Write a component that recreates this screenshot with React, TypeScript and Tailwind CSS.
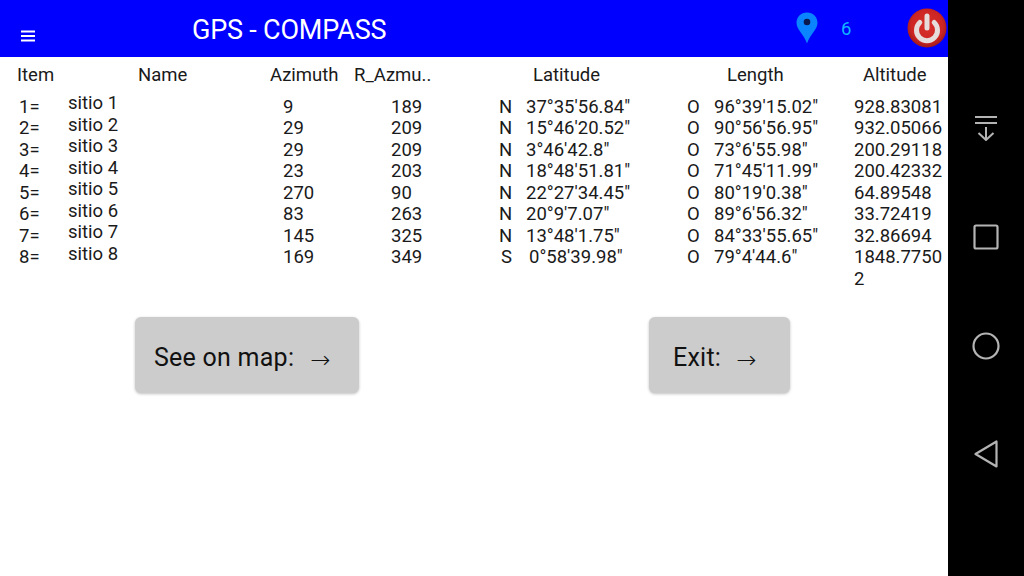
const rows = [
  { item: "1=", name: "sitio 1", az: "9", raz: "189", ns: "N", lat: "37°35'56.84\"", ew: "O", len: "96°39'15.02\"", alt: "928.83081" },
  { item: "2=", name: "sitio 2", az: "29", raz: "209", ns: "N", lat: "15°46'20.52\"", ew: "O", len: "90°56'56.95\"", alt: "932.05066" },
  { item: "3=", name: "sitio 3", az: "29", raz: "209", ns: "N", lat: "3°46'42.8\"", ew: "O", len: "73°6'55.98\"", alt: "200.29118" },
  { item: "4=", name: "sitio 4", az: "23", raz: "203", ns: "N", lat: "18°48'51.81\"", ew: "O", len: "71°45'11.99\"", alt: "200.42332" },
  { item: "5=", name: "sitio 5", az: "270", raz: "90", ns: "N", lat: "22°27'34.45\"", ew: "O", len: "80°19'0.38\"", alt: "64.89548" },
  { item: "6=", name: "sitio 6", az: "83", raz: "263", ns: "N", lat: "20°9'7.07\"", ew: "O", len: "89°6'56.32\"", alt: "33.72419" },
  { item: "7=", name: "sitio 7", az: "145", raz: "325", ns: "N", lat: "13°48'1.75\"", ew: "O", len: "84°33'55.65\"", alt: "32.86694" },
  { item: "8=", name: "sitio 8", az: "169", raz: "349", ns: "S", lat: "0°58'39.98\"", ew: "O", len: "79°4'44.6\"", alt: "1848.77502" },
]

const Header = () => (
  <div className="h-[57px] bg-[#0000ff] flex items-center relative shrink-0">
    <svg width="14" height="12" viewBox="0 0 14 12" className="ml-[21px] mt-[14px] shrink-0">
      <path d="M0 1.5h14M0 6h14M0 10.5h14" stroke="#fff" strokeWidth="2" />
    </svg>
    <span className="ml-[157px] w-[195px] whitespace-nowrap text-[27px] tracking-[-0.2px] text-white mt-[3px]">GPS - COMPASS</span>
    <svg width="24" height="32" viewBox="0 0 24 32" className="ml-[408px] shrink-0 -mt-px">
      <path d="M12 0.5C5.8 0.5 1.5 5 1.5 10.8c0 6.6 7 11 10.5 20.7C15.500 21.800 22.500 17.400 22.500 10.800 22.500 5 18.200 0.500 12 0.500z" fill="#0a84ff" />
      <circle cx="12" cy="10" r="3.300" fill="#0a1a50" />
    </svg>
    <span className="ml-[22px] text-[18.5px] text-[#10b4ff] mt-[2px]">6</span>
    <svg width="40" height="40" viewBox="0 0 40 40" className="absolute left-[907px] top-[8px]">
      <defs>
        <radialGradient id="powerRed" cx="50%" cy="45%" r="55%">
          <stop offset="0%" stopColor="#d9302c" />
          <stop offset="75%" stopColor="#cc2523" />
          <stop offset="100%" stopColor="#9c1a1a" />
        </radialGradient>
      </defs>
      <circle cx="20" cy="20" r="19.500" fill="url(#powerRed)" />
      <path d="M12.800 14.500a10.500 10.500 0 1 0 14.400 0" fill="none" stroke="#e6dcdc" strokeWidth="5" strokeLinecap="round" />
      <path d="M20 8v12" stroke="#e6dcdc" strokeWidth="5" strokeLinecap="round" />
    </svg>
  </div>
)

const TitleRow = () => (
  <div className="flex h-[35px] items-center pl-[17px] text-[18.5px] leading-[22px] shrink-0">
    <span className="w-[121px]">Item</span>
    <span className="w-[132px]">Name</span>
    <span className="w-[84px]">Azimuth</span>
    <span className="w-[179px]">R_Azmu..</span>
    <span className="w-[194px]">Latitude</span>
    <span className="w-[136px]">Length</span>
    <span>Altitude</span>
  </div>
)

const DataTable = () => (
  <div className="flex text-[18.5px] leading-[21.55px] pt-[4.5px] shrink-0">
    <div className="w-[68px] pl-[19px] shrink-0">
      {rows.map((r) => <div key={r.item}>{r.item}</div>)}
    </div>
    <div className="w-[215px] -mt-[3.5px] shrink-0">
      {rows.map((r) => <div key={r.name}>{r.name}</div>)}
    </div>
    <div className="w-[108px] shrink-0">
      {rows.map((r) => <div key={r.item}>{r.az}</div>)}
    </div>
    <div className="w-[108px] shrink-0">
      {rows.map((r) => <div key={r.item}>{r.raz}</div>)}
    </div>
    <div className="w-[13px] text-right shrink-0">
      {rows.map((r) => <div key={r.item}>{r.ns}</div>)}
    </div>
    <div className="w-[175px] pl-[14px] shrink-0">
      {rows.map((r) => (
        <div key={r.item} className={r.ns === "S" ? "pl-[3px]" : ""}>{r.lat}</div>
      ))}
    </div>
    <div className="w-[27px] shrink-0">
      {rows.map((r) => <div key={r.item}>{r.ew}</div>)}
    </div>
    <div className="w-[140px] shrink-0">
      {rows.map((r) => <div key={r.item}>{r.len}</div>)}
    </div>
    <div className="w-[94px] pr-[2px] break-all shrink-0">
      {rows.map((r) => <div key={r.item}>{r.alt}</div>)}
    </div>
  </div>
)

const ActionButton = ({ label, gap, className }: { label: string; gap: string; className: string }) => (
  <button className={`h-[76px] bg-[#cccccc] rounded-[6px] shadow-[0_1px_3px_rgba(0,0,0,0.25)] flex items-center text-[25px] tracking-[0.25px] text-[#111] shrink-0 ${className}`}>
    <span className="mt-[5px]">{label}</span>
    <span className={`${gap} mt-[9px] text-[24px] font-['DejaVu_Sans'] font-extralight`}>→</span>
  </button>
)

export default function App() {
  return (
    <div className="w-[1024px] h-[576px] flex overflow-hidden bg-white font-['Roboto',sans-serif] text-[#1a1a1a]">
      <div className="w-[948px] shrink-0 flex flex-col">
        <Header />
        <TitleRow />
        <DataTable />
        <div className="flex pl-[135px] gap-[290px] mt-[27px]">
          <ActionButton label="See on map:" gap="ml-[16px]" className="w-[224px] pl-[19px]" />
          <ActionButton label="Exit:" gap="ml-[15px]" className="w-[141px] pl-[24px]" />
        </div>
      </div>
      <div className="w-[76px] bg-black flex flex-col items-center pt-[115px] gap-[83px]">
        <svg width="24" height="26" viewBox="0 0 24 26" fill="none" stroke="#b4b4b4" strokeWidth="2">
          <path d="M1 2h22M1 8h22M12 12v13M4.500 18l7.500 7 7.500-7" />
        </svg>
        <svg width="26" height="26" viewBox="0 0 26 26" fill="none" stroke="#b4b4b4" strokeWidth="2.200">
          <rect x="1.500" y="1.500" width="23" height="23" rx="1.500" />
        </svg>
        <svg width="28" height="28" viewBox="0 0 28 28" fill="none" stroke="#b4b4b4" strokeWidth="2.200" className="-my-px">
          <circle cx="14" cy="14" r="12.500" />
        </svg>
        <svg width="24" height="28" viewBox="0 0 24 28" fill="none" stroke="#b4b4b4" strokeWidth="2.200" strokeLinejoin="round" className="-mt-[2px]">
          <path d="M22.500 1.500v25L1.500 14z" />
        </svg>
      </div>
    </div>
  )
}
